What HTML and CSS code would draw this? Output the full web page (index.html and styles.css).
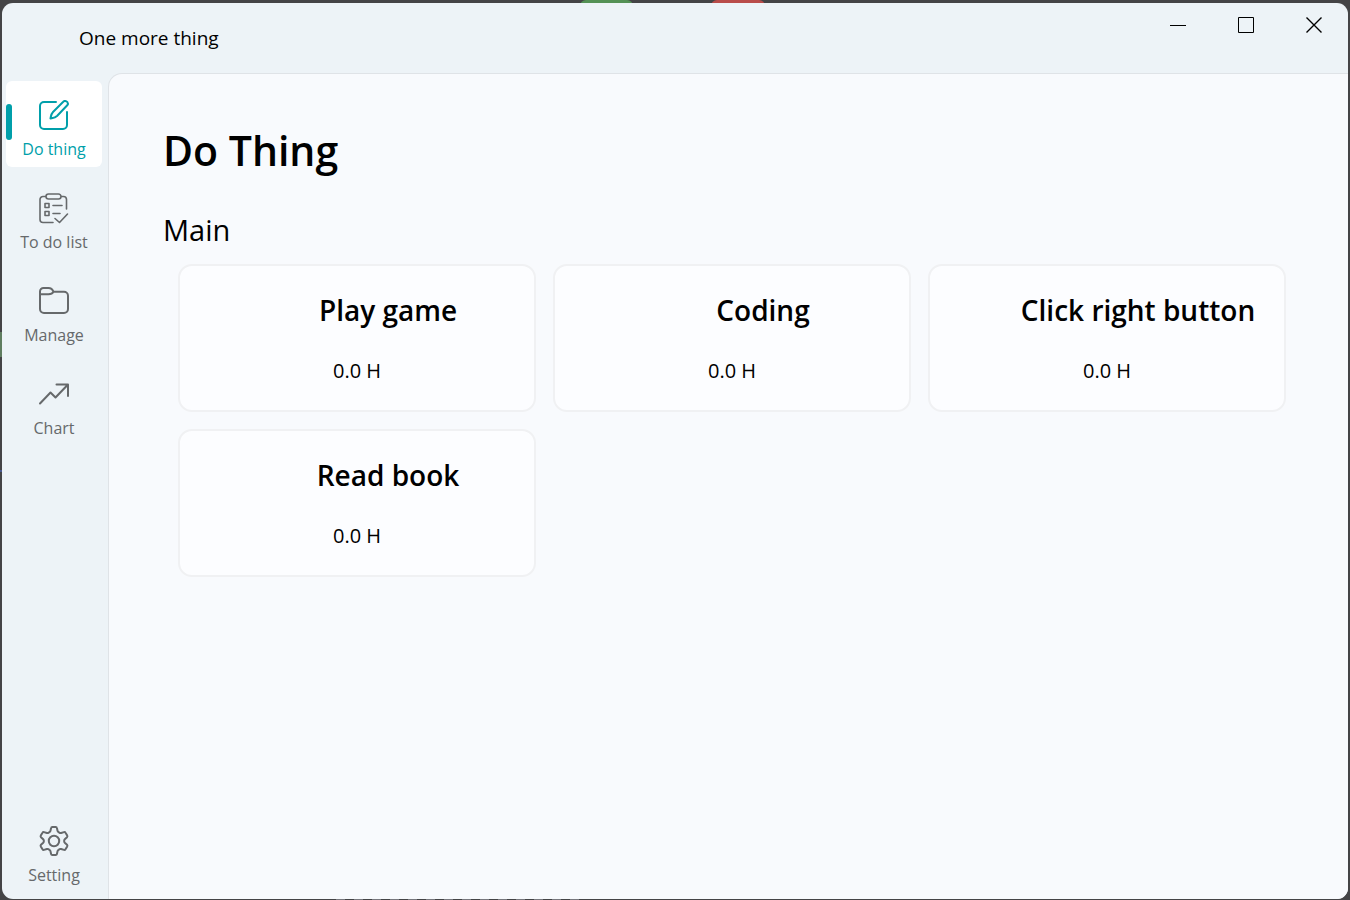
FILE: index.html
```html
<!DOCTYPE html>
<html lang="en">
<head>
<meta charset="utf-8">
<title>One more thing</title>
<link rel="stylesheet" href="styles.css">
</head>
<body>
<div class="desktop">
  <span class="behind behind-green"></span>
  <span class="behind behind-red"></span>
  <span class="behind behind-side"></span>
  <span class="behind behind-blue"></span>
  <span class="behind behind-dashes"></span>
  <div class="window">
    <header class="titlebar">
      <span class="app-title">One more thing</span>
      <div class="controls">
        <button class="control" aria-label="Minimize"><svg width="16" height="16" viewBox="0 0 16 16"><path d="M0 8.500H16"/></svg></button>
        <button class="control" aria-label="Maximize"><svg width="16" height="16" viewBox="0 0 16 16"><path d="M.5.5h15v15H.5z"/></svg></button>
        <button class="control" aria-label="Close"><svg width="16" height="16" viewBox="0 0 16 16"><path class="cross" d="M.5.5l15 15M15.500.5l-15 15"/></svg></button>
      </div>
    </header>
    <div class="body">
      <nav class="sidebar">
        <button class="nav-item active">
          <svg class="icon" width="32" height="32" viewBox="0 0 32 32"><path d="M18 3H6a4 4 0 0 0-4 4v19a4 4 0 0 0 4 4h19a4 4 0 0 0 4-4V13M26.500 2a2.700 2.700 0 0 1 3 4L19 17c-2 2-4 2-6.500 2.500C13 17 13 15 15 13L25 3a4 4 0 0 1 1.500-1z"/></svg>
          <span>Do thing</span>
        </button>
        <button class="nav-item">
          <svg class="icon thin" width="32" height="32" viewBox="0 0 32 32"><path d="M8 4.500H5a3 3 0 0 0-3 3v20a3 3 0 0 0 3 3h10M23 4.500h2.500a3 3 0 0 1 3 3V17M10.500 2h10a2.500 2.500 0 0 1 0 5h-10a2.500 2.500 0 0 1 0-5zM7 11.500h4v4H7zM7 19.500h4v4H7zM15 13.500h9M15 21.500h7M17 26.500l4.500 4L29.500 22"/></svg>
          <span>To do list</span>
        </button>
        <button class="nav-item">
          <svg class="icon" width="32" height="32" viewBox="0 0 32 32"><path d="M2 9V6.500a3.500 3.500 0 0 1 3.500-3.500H10.500c2.500 0 4 1.300 5 3.700H26a4 4 0 0 1 4 4V24a4 4 0 0 1-4 4H6a4 4 0 0 1-4-4zM2 9.200h8.500c2.500 0 4-.6 5-2.500"/></svg>
          <span>Manage</span>
        </button>
        <button class="nav-item">
          <svg class="icon" width="32" height="32" viewBox="0 0 32 32"><path d="M2 25.500L12.500 14.500l5 5L29.500 7M18.500 6.500H30V18"/></svg>
          <span>Chart</span>
        </button>
        <button class="nav-item bottom">
          <svg class="icon" width="32" height="32" viewBox="0 0 32 32"><circle cx="16" cy="16" r="5.200"/><path d="M14.300 2h3.400q1 0 1.200 1l.7 3q.2.800 1 1.200l1 .6q.7.400 1.500.2l2.900-.9q1-.3 1.500.6l1.700 2.900q.5.900-.2 1.600l-2.200 2.100q-.6.600-.6 1.200v1q0 .6.600 1.200l2.200 2.100q.7.700.2 1.600l-1.700 2.900q-.5.900-1.500.6l-2.900-.9q-.8-.2-1.500.2l-1 .6q-.8.400-1 1.200l-.7 3q-.2 1-1.200 1h-3.400q-1 0-1.200-1l-.7-3q-.2-.8-1-1.200l-1-.6q-.7-.4-1.500-.2l-2.900.9q-1 .3-1.500-.6l-1.700-2.900q-.5-.9.200-1.600l2.200-2.100q.6-.6.6-1.200v-1q0-.6-.6-1.200l-2.200-2.100q-.7-.7-.2-1.600l1.700-2.900q.5-.9 1.500-.6l2.900.9q.8.200 1.500-.2l1-.6q.8-.4 1-1.200l.7-3q.2-1 1.200-1z"/></svg>
          <span>Setting</span>
        </button>
      </nav>
      <main class="content">
        <h1>Do Thing</h1>
        <h2>Main</h2>
        <div class="cards">
          <article class="card"><h3>Play game</h3><p>0.0 H</p></article>
          <article class="card"><h3>Coding</h3><p>0.0 H</p></article>
          <article class="card"><h3>Click right button</h3><p>0.0 H</p></article>
          <article class="card"><h3>Read book</h3><p>0.0 H</p></article>
        </div>
      </main>
    </div>
  </div>
</div>
</body>
</html>
```
FILE: styles.css
```css
* { box-sizing: border-box; }
body { margin: 0; font-family: "Open Sans", "Noto Sans", sans-serif; color: #000; }
h1, h2, h3, p { margin: 0; }
button { border: 0; background: none; font: inherit; color: inherit; padding: 0; }
svg { display: block; fill: none; stroke: currentColor; }

.desktop {
  position: relative;
  display: flex;
  min-height: 100vh;
  padding: 3px 2px 1px;
  background: #444446;
}
.behind { position: absolute; }
.behind-green { left: 580px; top: 0; width: 53px; height: 6px; border-radius: 6px 6px 0 0; background: #549155; }
.behind-red { left: 711px; top: 0; width: 54px; height: 6px; border-radius: 6px 6px 0 0; background: #b94c4a; }
.behind-side { left: 0; top: 332px; width: 4px; height: 25px; background: #5f7d60; }
.behind-blue { left: 0; top: 470px; width: 4px; height: 2px; background: #4a5a90; }
.behind-dashes {
  left: 336px; bottom: 0; width: 252px; height: 1px;
  background: repeating-linear-gradient(90deg, #77777d 0 9px, #444446 9px 18px);
}

.window {
  position: relative;
  flex: 1;
  display: flex;
  flex-direction: column;
  border-radius: 11px;
  overflow: hidden;
  background: #edf3f7;
}
.titlebar { display: flex; justify-content: space-between; height: 70px; }
.app-title { padding-left: 77px; font-size: 19px; line-height: 70px; }
.controls { display: flex; height: 44px; }
.control { display: grid; place-items: center; width: 68px; }
.cross { stroke-width: 1.400; }

.body { flex: 1; display: flex; }
.sidebar {
  display: flex;
  flex-direction: column;
  gap: 7px;
  width: 106px;
  padding: 8px 6px 6px 4px;
}
.nav-item {
  position: relative;
  display: flex;
  flex-direction: column;
  align-items: center;
  gap: 6px;
  height: 86px;
  padding-top: 18px;
  border-radius: 6px;
  font-size: 16px;
  line-height: 24px;
  color: #66696b;
}
.nav-item.active { background: #fff; color: #009faa; }
.nav-item.active::before {
  content: "";
  position: absolute;
  left: 0;
  top: 23px;
  width: 6px;
  height: 36px;
  border-radius: 3px;
  background: #009faa;
}
.nav-item.bottom { margin-top: auto; }
.icon { stroke-width: 2; stroke-linejoin: round; stroke-linecap: round; }
.icon.thin { stroke-width: 1.600; }

.content {
  flex: 1;
  padding: 48px 62px 20px 54px;
  border: solid #dfe3e7;
  border-width: 1px 0 0 1px;
  border-radius: 14px 0 0 0;
  background: #f8fafd;
}
h1 { font-size: 41px; font-weight: 600; line-height: 56px; }
h2 { margin-top: 32px; font-size: 29px; font-weight: 400; line-height: 40px; }
.cards {
  display: grid;
  grid-template-columns: repeat(3, 1fr);
  gap: 17px;
  padding: 14px 0 0 15px;
}
.card {
  height: 148px;
  padding-top: 24px;
  border: 2px solid #f0f1f3;
  border-radius: 14px;
  background: #fcfdff;
  text-align: center;
}
.card h3 { padding-left: 62px; font-size: 28px; font-weight: 600; line-height: 40px; white-space: nowrap; }
.card p { margin-top: 25px; font-size: 20px; line-height: 32px; }
```
